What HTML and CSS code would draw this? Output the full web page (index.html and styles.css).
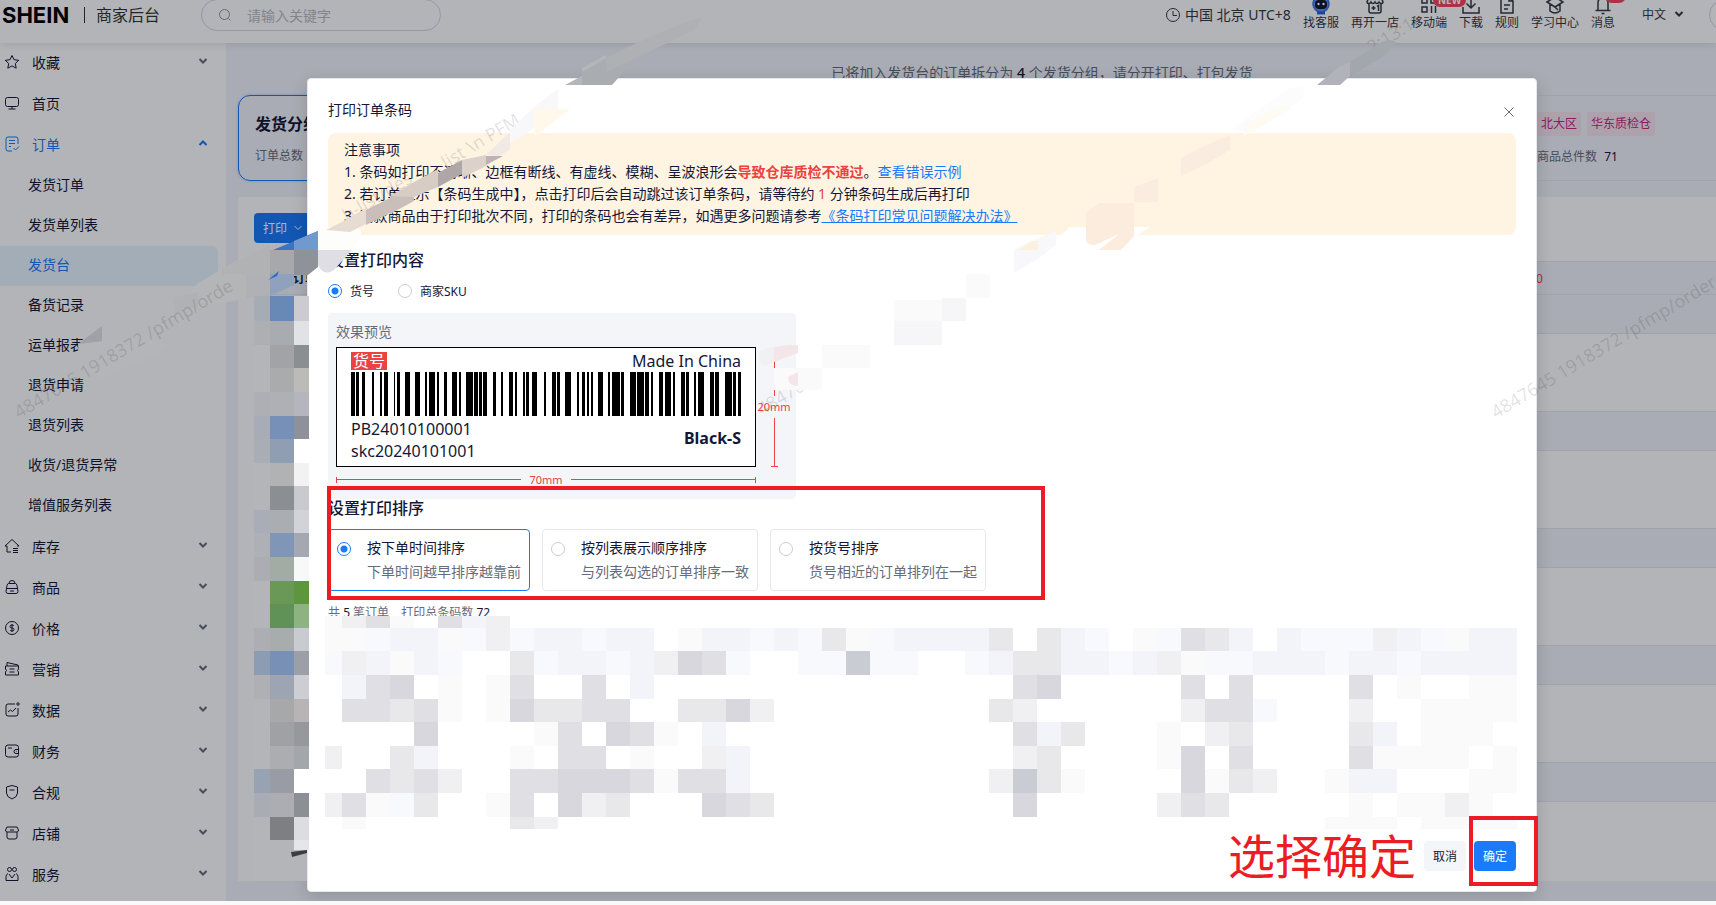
FILE: index.html
```html
<!DOCTYPE html>
<html lang="zh-CN">
	<head>
		<meta charset="utf-8">
		<title>商家后台</title>
		<link rel="stylesheet" href="styles.css">
	</head>
	<body>
		<svg width="0" height="0" class="defs">
			<defs>
				<symbol id="down" viewBox="0 0 10 10"><path d="M1.500 3l3.500 3.500L8.500 3"/></symbol>
				<symbol id="up" viewBox="0 0 10 10"><path d="M1.500 7L5 3.500 8.500 7"/></symbol>
			</defs>
		</svg>
		<div class="app">
			<header class="header">
				<strong class="logo">SHEIN</strong>
				<span class="divider"></span>
				<span class="site">商家后台</span>
				<label class="search">
					<svg class="icon" viewBox="0 0 16 16"><circle cx="7.500" cy="7.500" r="5"/><path d="M11.500 11.500l2 2"/></svg>
					<input type="text" placeholder="请输入关键字" aria-label="搜索">
				</label>
				<div class="tools">
					<span class="zone">
						<svg class="icon" viewBox="0 0 16 16"><circle cx="8" cy="8" r="6.500"/><path d="M8 4v4.500h4"/></svg>
						中国 北京 UTC+8
					</span>
					<a class="tool" href="#">
						<svg viewBox="0 0 20 20"><circle cx="10" cy="9" r="8" fill="#5b8ff9" stroke="#3a6fe0"/><rect x="4" y="5" width="12" height="9" rx="4" fill="#10162c" stroke="none"/><circle cx="7.500" cy="9" r="1.200" fill="#fff" stroke="none"/><circle cx="12.500" cy="9" r="1.200" fill="#fff" stroke="none"/><path d="M6 18h8" stroke="#2a62d8" stroke-width="3"/></svg>
						找客服
					</a>
					<a class="tool" href="#">
						<svg viewBox="0 0 20 20"><path d="M4 2h12l2 5c0 2-3 2-4 0-1 2-3 2-4 0-1 2-3 2-4 0-1 2-4 2-4 0zM4 9v7q0 2 2 2h8q2 0 2-2V9M6.500 13h4M8.500 11v4M12 11.500l1.500-1V16"/></svg>
						再开一店
					</a>
					<a class="tool" href="#">
						<svg viewBox="0 0 20 20"><path d="M3 3h5v5H3zM12 3h5v5h-5zM3 12h5v5H3zM12.500 11v7M16.500 11v7"/></svg>
						移动端
						<em class="badge">NEW</em>
					</a>
					<a class="tool" href="#">
						<svg viewBox="0 0 20 20"><path d="M10 1v12M5.500 8.500L10 13l4.500-4.500M2 12v6h16v-6"/></svg>
						下载
					</a>
					<a class="tool" href="#">
						<svg viewBox="0 0 20 20"><path d="M4 2h8l4 4v12H4zM12 2v4h4M7 10h6M7 14h4"/></svg>
						规则
					</a>
					<a class="tool" href="#">
						<svg viewBox="0 0 20 20"><path d="M2 7l8-5 8 5-8 5zM5 9v7q5 4 10 0V9M10 12l3 3"/></svg>
						学习中心
					</a>
					<a class="tool" href="#">
						<svg viewBox="0 0 20 20"><path d="M5 15V8q0-5 5-5t5 5v7M2.500 15.500h15M8.500 18.500h3"/></svg>
						消息
						<em class="badge dot">12</em>
					</a>
					<button class="lang">中文 <svg class="chev" viewBox="0 0 10 10"><use href="#down"/></svg></button>
					<span class="avatar"></span>
				</div>
			</header>
			<div class="body">
				<nav class="side">
					<a class="item" href="#"><svg class="icon" viewBox="0 0 16 16"><path d="M8 1.500l2 4.200 4.700.6-3.400 3.200.9 4.700L8 11.900l-4.200 2.300.9-4.700L1.300 6.300 6 5.700z"/></svg>收藏<svg class="chev" viewBox="0 0 10 10"><use href="#down"/></svg></a>
					<a class="item" href="#"><svg class="icon" viewBox="0 0 16 16"><rect x="1.500" y="2.500" width="13" height="9" rx="2"/><path d="M8 11.500V14M4.500 14h7"/></svg>首页</a>
					<a class="item on" href="#"><svg class="icon" viewBox="0 0 16 16"><path d="M14 8V3q0-2-2-2H4Q2 1 2 3v10q0 2 2 2h4M5 4.500h6M5 7.500h6M5 10.500h2M9.500 12l2 2 3.500-3.500"/></svg>订单<svg class="chev" viewBox="0 0 10 10"><use href="#up"/></svg></a>
					<div class="subs">
						<a href="#">发货订单</a>
						<a href="#">发货单列表</a>
						<a class="on" href="#">发货台</a>
						<a href="#">备货记录</a>
						<a href="#">运单报表</a>
						<a href="#">退货申请</a>
						<a href="#">退货列表</a>
						<a href="#">收货/退货异常</a>
						<a href="#">增值服务列表</a>
					</div>
					<a class="item" href="#"><svg class="icon" viewBox="0 0 16 16"><path d="M7 14H3V8H1l7-6.500L15 8h-2M9 10.500h5M9 12.500h5M9 14.500h5"/></svg>库存<svg class="chev" viewBox="0 0 10 10"><use href="#down"/></svg></a>
					<a class="item" href="#"><svg class="icon" viewBox="0 0 16 16"><path d="M5 4.500q0-3 3-3t3 3M4.500 4.500h7q1 0 1.500 2l1 6q0 2-2 2H4q-2 0-2-2l1-6q.5-2 1.500-2zM2.500 9.500h11M6 12h4"/></svg>商品<svg class="chev" viewBox="0 0 10 10"><use href="#down"/></svg></a>
					<a class="item" href="#"><svg class="icon" viewBox="0 0 16 16"><circle cx="8" cy="8" r="6.500"/><path d="M10 6q-.5-1-2-1-2 0-2 1.500T8 8t2 1.500T8 11q-1.500 0-2-1M8 4v8"/></svg>价格<svg class="chev" viewBox="0 0 10 10"><use href="#down"/></svg></a>
					<a class="item" href="#"><svg class="icon" viewBox="0 0 16 16"><path d="M3 5V1.500L14 4v1M1.500 5h13v3q-2 1.500 0 3v3h-13v-3q2-1.500 0-3zM5.500 8h5M5.500 11h5"/></svg>营销<svg class="chev" viewBox="0 0 10 10"><use href="#down"/></svg></a>
					<a class="item" href="#"><svg class="icon" viewBox="0 0 16 16"><path d="M11 2H4Q2 2 2 4v8q0 2 2 2h8q2 0 2-2V6M4 10l2.500-2 2 1.500L12 6"/><circle cx="14" cy="2" r="1.200"/></svg>数据<svg class="chev" viewBox="0 0 10 10"><use href="#down"/></svg></a>
					<a class="item" href="#"><svg class="icon" viewBox="0 0 16 16"><rect x="1.500" y="2" width="13" height="12" rx="2.500"/><path d="M4 5h4M14.500 6.500H12q-2 0-2 2t2 2h2.500M12 8.500h.5"/></svg>财务<svg class="chev" viewBox="0 0 10 10"><use href="#down"/></svg></a>
					<a class="item" href="#"><svg class="icon" viewBox="0 0 16 16"><path d="M8 1.500L13.500 3v6q0 4-5.500 6-5.500-2-5.500-6V3zM5.500 6h5"/></svg>合规<svg class="chev" viewBox="0 0 10 10"><use href="#down"/></svg></a>
					<a class="item" href="#"><svg class="icon" viewBox="0 0 16 16"><path d="M3 2h10l1.500 3q0 2-2 2h-9q-2 0-2-2zM3 7v5q0 2 2 2h6q2 0 2-2V7M6 5h4"/></svg>店铺<svg class="chev" viewBox="0 0 10 10"><use href="#down"/></svg></a>
					<a class="item" href="#"><svg class="icon" viewBox="0 0 16 16"><circle cx="5.500" cy="3.500" r="2"/><circle cx="10.500" cy="3.500" r="2"/><path d="M4 7.500q-2 1-2 3v4h12v-4q0-2-2-3M5 8l3 4 3-4"/></svg>服务<svg class="chev" viewBox="0 0 10 10"><use href="#down"/></svg></a>
				</nav>
				<main class="main">
					<p class="tip">已将加入发货台的订单拆分为 <b>4</b> 个发货分组，请分开打印、打包发货</p>
					<div class="groups">
						<section class="group current">
							<h2>发货分组1</h2>
							<p>订单总数</p>
						</section>
						<section class="group last">
							<div class="tags"><span>北大区</span><span>华东质检仓</span></div>
							<p class="count">商品总件数 <b>71</b></p>
						</section>
					</div>
					<section class="panel">
						<button class="print">打印 <svg class="chev" viewBox="0 0 10 10"><use href="#down"/></svg></button>
						<table class="orders">
							<thead><tr><th class="name">订单</th><th class="num">0</th></tr></thead>
							<tbody>
								<tr class="band"><td colspan="2"></td></tr><tr><td colspan="2"></td></tr>
								<tr class="band"><td colspan="2"></td></tr><tr><td colspan="2"></td></tr>
								<tr class="band"><td colspan="2"></td></tr><tr><td colspan="2"></td></tr>
								<tr class="band"><td colspan="2"></td></tr><tr><td colspan="2"></td></tr>
								<tr class="band"><td colspan="2"></td></tr><tr><td colspan="2"></td></tr>
							</tbody>
						</table>
					</section>
				</main>
			</div>
			<div class="mask"></div>
			<div class="modal" role="dialog" aria-labelledby="title">
				<div class="modal-head">
					<span id="title">打印订单条码</span>
					<button class="close" aria-label="关闭"><svg viewBox="0 0 12 12"><path d="M1.500 1.500l9 9M10.500 1.500l-9 9"/></svg></button>
				</div>
				<div class="notice">
					<p>注意事项</p>
					<p>1. 条码如打印不清晰、边框有断线、有虚线、模糊、呈波浪形会<b>导致仓库质检不通过</b>。<a href="#">查看错误示例</a></p>
					<p>2. 若订单显示【条码生成中】，点击打印后会自动跳过该订单条码，请等待约 <i>1</i> 分钟条码生成后再打印</p>
					<p>3. 同款商品由于打印批次不同，打印的条码也会有差异，如遇更多问题请参考<a class="line" href="#">《条码打印常见问题解决办法》</a></p>
				</div>
				<h3>设置打印内容</h3>
				<div class="kinds">
					<label><input type="radio" name="kind" checked>货号</label>
					<label><input type="radio" name="kind">商家SKU</label>
				</div>
				<div class="preview">
					<p>效果预览</p>
					<div class="size">
						<div class="ticket">
							<div class="row"><span class="sku">货号</span><span>Made In China</span></div>
							<svg class="barcode" viewBox="0 0 1170 132" preserveAspectRatio="none"></svg>
							<div class="row">
								<div>PB24010100001<br>skc20240101001</div>
								<b>Black-S</b>
							</div>
						</div>
						<div class="tall">20mm</div>
						<div class="wide">70mm</div>
					</div>
				</div>
				<h3 class="sort">设置打印排序</h3>
				<div class="sorts">
					<label class="card on"><input type="radio" name="sort" checked><span>按下单时间排序<small>下单时间越早排序越靠前</small></span></label>
					<label class="card"><input type="radio" name="sort"><span>按列表展示顺序排序<small>与列表勾选的订单排序一致</small></span></label>
					<label class="card"><input type="radio" name="sort"><span>按货号排序<small>货号相近的订单排列在一起</small></span></label>
				</div>
				<p class="total">共 <b>5</b> 笔订单 <span>打印总条码数 <b>72</b></span></p>
				<svg class="mosaic" viewBox="0 0 1193 213" preserveAspectRatio="none"></svg>
				<div class="foot">
					<span class="hint">选择确定</span>
					<button class="btn">取消</button>
					<button class="btn primary">确定</button>
				</div>
			</div>
			<svg class="cover">
				<g class="mark">
					<text transform="translate(347 222) rotate(-31)">h-list/des</text>
					<text transform="translate(446 169) rotate(-31)">list \n PFM</text>
					<text transform="translate(1372 54) rotate(-31)">2:13:1</text>
					<text transform="translate(1496 419) rotate(-31)">4847645 1918372 /pfmp/order-</text>
					<text transform="translate(762 416) rotate(-31)">4847645</text>
				</g>
				<g class="strip">
					<path fill="#9fa1a6" d="M78 344l24-18v15l-7 4z"/>
					<path fill="#b3b5b8" d="M78 344l67-8 25 9-20 13-50 22-20-12z"/>
					<path fill="#b4b5b6" d="M198 283l48-28 24-5v24l-24 24-46 10-28 7 12-16z"/>
					<path fill="#b0b1b4" d="M246 274h24v24h-24z M174 298l24-6v14l-24 8z"/>
					<path fill="#b1b2b4" d="M222 268l48-23v29h-48z"/>
					<path fill="#3b74bf" d="M273 250l45-19v19z"/>
					<path fill="#7199cf" d="M294 241l24-10v19h-24z"/>
					<path fill="#a7a8ab" d="M270 250h24v24h-24z"/>
					<path fill="#909299" d="M294 250h24v17l-10 8h-14z"/>
					<path fill="#8fa1bd" d="M270 274h24v11l-24 11z"/>
					<path fill="#2f6fc1" d="M268 280l11-9-2 5z"/>
					<path fill="#fdfdfc" d="M318 232l10-5h28q7 2 5 9l-10 16h-33z"/>
					<path fill="#dfdee4" d="M318 250h34l-18 20q-7 5-13 0l-3-5z"/>
					<path fill="#e6dcd2" d="M326 230l16-8 24-14v16l-16 8z"/>
					<path fill="#c9beb9" d="M366 210l24-12v15l-24 12z M390 196l24-13v18l-24 13z"/>
					<path fill="#d8cdc5" d="M390 196l24-14 24-13v18l-24 10z"/>
					<path fill="#afa6a7" d="M438 173l24-13v14l-24 13z"/>
					<path fill="#dcd1cb" d="M462 160l24-5v11l-24 12z"/>
					<path fill="#bdb3b4" d="M486 156h17l-17 9z"/>
					<path fill="#f1e9e3" d="M486 155l24-23v17l-10 7z"/>
					<path fill="#f8f8fa" d="M510 130l24-23 24-18v20l-33 25-15 9z"/>
					<path fill="#fff8eb" d="M534 109h36l-36 28z"/>
					<path fill="#b5b6bb" d="M565 85l17-9v-8l24-13v30z"/>
					<path fill="#a9acb1" d="M582 72l48-27v20l-18 20h-30z"/>
					<path fill="#aeb0b4" d="M606 58l50-24 36-14 10-2-8 12-62 30-26 12z"/>
					<path fill="#b2b3ba" d="M1317 85l22-18 11-5v14l-10 9z"/>
					<path fill="#a2a6ad" d="M1350 62l24-15 8-5q8-4 14 0l-12 14-34 20z"/>
					<path fill="#fcfcfd" d="M1230 130l60-42 14-1-2 12-50 35z"/>
					<path fill="#fffaf2" d="M1245 124l35-17 12 1-48 28z"/>
					<path fill="#faeddf" d="M1181 158l25-13 24-10v15l-24 14-25 12z M1134 187l24-9v24h-24z"/>
					<path fill="#fff" d="M1050 245l20-18h80l-12 8-70 14z"/>
					<path fill="#fcecdd" d="M1086 213l14-10h34v33l-13 14h-22l20-16-24 11q-9 0-9-6z"/>
					<path fill="#f8f8fa" d="M1014 250l14-8 28-11v14l-18 14-24 14z"/>
					<path fill="#fdf0de" d="M1018 250l15-9h5v9z"/>
					<path fill="#fafafb" d="M966 274h24v24h-24z M894 300h48v22h-48z M822 345h48v23h-48z M774 368h48v22h-48z"/>
					<path fill="#f6f6f8" d="M942 298h24v23h-24z M894 321h48v24h-48z"/>
					<path fill="#f1f1f3" d="M758 353q6-6 16-6v15l-8 4q-8 0-8-13z"/>
					<path fill="#f4e6e8" d="M774 347l14-2h10v8l-24 9z M788 377l10-5v14q-10 0-10-9z"/>
				</g>
				<g class="mark">
					<text transform="translate(19 419) rotate(-31)">4847645 1918372 /pfmp/orde</text>
				</g>
				<g id="column"></g>
				<path fill="#3a3e41" d="M291 852l16-2v3l-15 4z"/>
			</svg>
			<div class="frame sort-frame"></div>
			<div class="frame ok-frame"></div>
		</div>
		<script src="script.js"></script>
	</body>
</html>
```
FILE: styles.css
```css
*{
	margin: 0;
	padding: 0;
	box-sizing: border-box;
}
html,body{
	height: 100%;
	overflow: hidden;
	background: #f9f9fa;
}
body,button,input{
	font-family: "Noto Sans", "Noto Sans CJK SC", sans-serif;
	font-size: 14px;
	color: #141737;
}
a{
	color: inherit;
	text-decoration: none;
}
button{
	border: 0;
	background: none;
}
svg{
	fill: none;
	stroke: currentColor;
}
b{
	font-weight: 500;
}
.defs{
	position: absolute;
}
.icon{
	width: 16px;
	height: 16px;
	flex: none;
}
.chev{
	width: 10px;
	height: 10px;
	flex: none;
}
.app{
	position: relative;
	height: calc(100% - 4px);
	overflow: hidden;
	background: #f1f4fb;
}

/* header */
.header{
	position: relative;
	height: 43px;
	padding: 0 0 12px 2px;
	display: flex;
	align-items: flex-end;
	background: #fff;
	box-shadow: 0 2px 8px rgba(0, 0, 0, .1);
	overflow: hidden;
	line-height: 32px;
}
.logo{
	font-family: Inter, sans-serif;
	font-size: 22px;
	width: 82px;
	color: #000;
}
.divider{
	width: 1px;
	height: 16px;
	margin: 0 11px 8px 0;
	background: #333;
}
.site{
	width: 105px;
	font-size: 16px;
	color: #333;
}
.search{
	width: 240px;
	height: 32px;
	display: flex;
	align-items: center;
	gap: 14px;
	padding: 0 15px;
	border: 1px solid #d5d7de;
	border-radius: 16px;
	color: #8f94a3;
}
.search input{
	width: 160px;
	border: 0;
	outline: 0;
	background: none;
}
.search input::placeholder{
	color: #b9bcc6;
}
.tools{
	margin-left: auto;
	margin-right: -25px;
	display: flex;
	align-items: flex-end;
	gap: 12px;
	color: #333842;
}
.zone{
	display: flex;
	align-items: center;
	gap: 4px;
}
.tool{
	position: relative;
	display: flex;
	flex-direction: column;
	align-items: center;
	font-size: 12px;
	line-height: 16px;
}
.tool svg{
	width: 20px;
	height: 20px;
	stroke-width: 1.5;
}
.badge{
	position: absolute;
	top: -2px;
	left: 22px;
	padding: 0 5px;
	border-radius: 7px;
	background: #f5455c;
	color: #fff;
	font-size: 10px;
	font-style: normal;
	font-weight: 700;
	line-height: 14px;
}
.dot{
	top: -6px;
	left: 14px;
}
.lang{
	display: flex;
	align-items: center;
	gap: 8px;
	height: 28px;
	margin: 0 13px 3px 15px;
	font-size: 12px;
	color: #333842;
	stroke-width: 2;
}
.avatar{
	width: 32px;
	height: 32px;
	border: 1px solid #d5d7de;
	border-radius: 50%;
}

/* side menu */
.body{
	display: flex;
	width: calc(100% + 140px);
	height: calc(100% - 43px);
}
.side{
	flex: none;
	width: 226px;
	background: #fff;
}
.item{
	display: flex;
	align-items: center;
	gap: 12px;
	height: 41px;
	padding: 0 18px 3px 4px;
}
.item .chev{
	margin: 0 0 2px auto;
	color: #666c7c;
	stroke-width: 2;
}
.item.on,.item.on .chev,.subs .on{
	color: #197afa;
}
.subs{
	margin-right: 8px;
	padding-bottom: 1px;
}
.subs a{
	display: block;
	height: 40px;
	padding-left: 28px;
	line-height: 38px;
	border-radius: 0 6px 6px 0;
}
.subs .on{
	background: #e8f5ff;
}

/* page behind the dialog */
.main{
	flex: 1;
	padding: 20px 0 20px 12px;
	display: flex;
	flex-direction: column;
}
.tip{
	height: 32px;
	padding-right: 10px;
	line-height: 20px;
	text-align: center;
	color: #666c7c;
}
.tip b{
	color: #141737;
}
.groups{
	display: flex;
	gap: 16px;
	margin-bottom: 16px;
}
.group{
	flex: 1;
	height: 86px;
	padding: 16px;
	border: 1px solid #e4e7ef;
	border-radius: 12px;
	color: #666c7c;
	font-size: 12px;
}
.group.current{
	border-color: #197afa;
	box-shadow: 0 0 2px 1px #cfe2fb;
}
.group h2{
	font-size: 16px;
	line-height: 24px;
	margin-bottom: 10px;
	color: #141737;
}
.group.last{
	flex: 0 0 352px;
	padding: 16px 32px;
}
.tags{
	display: flex;
	gap: 6px;
	color: #c92486;
}
.tags span{
	padding: 0 4px;
	line-height: 24px;
	border-radius: 2px;
	background: #f7e6ee;
}
.count{
	margin-top: 11px;
}
.count b{
	margin-left: 4px;
	font-weight: 400;
	color: #141737;
}
.panel{
	flex: 1;
	padding: 16px 0 0 16px;
	background: #fff;
}
.print{
	display: flex;
	align-items: center;
	gap: 6px;
	width: 62px;
	height: 30px;
	margin-bottom: 18px;
	padding: 0 9px;
	border-radius: 4px;
	background: #197afa;
	color: #fff;
	font-size: 12px;
}
.orders{
	width: 100%;
	border-collapse: collapse;
}
.orders th,.orders td{
	border-top: 1px solid #e4e7ef;
	text-align: left;
}
.orders th{
	height: 33px;
	padding-left: 39px;
	background: #f1f4fb;
	font-size: 12px;
}
.orders td{
	height: 78px;
}
.orders .band td{
	height: 39px;
	background: #f1f4fb;
}
.orders .num{
	width: 320px;
	padding: 0;
	color: #f23c45;
	font-size: 12px;
	font-weight: 400;
}
.mask{
	position: absolute;
	inset: 0;
	background: rgba(2, 8, 18, .3);
}

/* dialog */
.modal{
	position: absolute;
	top: 78px;
	right: 179px;
	bottom: 9px;
	left: 307px;
	padding: 18px 20px 0;
	border: 1px solid #e6e8ee;
	border-radius: 4px;
	background: #fff;
	box-shadow: 0 4px 16px rgba(0, 0, 0, .15);
	display: flex;
	flex-direction: column;
}
.modal-head{
	display: flex;
	align-items: center;
	justify-content: space-between;
	height: 24px;
	margin-bottom: 12px;
}
.close{
	padding: 6px 1px 0;
	color: #666c7c;
}
.close svg{
	width: 12px;
	height: 12px;
}
.notice{
	padding: 6px 16px 8px;
	border-radius: 8px;
	background: #fff3e1;
	line-height: 22px;
}
.notice b{
	font-weight: 700;
	color: #eb4242;
}
.notice i{
	font-style: normal;
	color: #eb4242;
}
.notice a{
	color: #197afa;
}
.notice .line{
	text-decoration: underline;
}
h3{
	margin-top: 13px;
	font-size: 16px;
	font-weight: 500;
	line-height: 24px;
}
.kinds{
	display: flex;
	gap: 24px;
	margin: 9px 0 12px;
}
.kinds label{
	display: flex;
	align-items: center;
	gap: 8px;
	height: 20px;
	font-size: 12px;
}
input[type=radio]{
	appearance: none;
	flex: none;
	width: 14px;
	height: 14px;
	border: 1px solid #c9cbd8;
	border-radius: 50%;
	background: #fff;
}
input[type=radio]:checked{
	border-color: #197afa;
	background: radial-gradient(#197afa 3px, #fff 4px);
}
.preview{
	width: 468px;
	padding: 8px 8px 8px;
	border-radius: 4px;
	background: #f4f5f9;
}
.preview p{
	margin-bottom: 4px;
	line-height: 22px;
	color: #666c7c;
}
.size{
	display: grid;
	grid-template-columns: 420px 36px;
	row-gap: 2px;
	font-size: 11px;
	color: #eb4242;
}
.ticket{
	height: 120px;
	padding: 2px 14px;
	border: 1px solid #000;
	background: #fff;
	font-size: 16px;
	line-height: 22px;
	color: #141737;
}
.row{
	display: flex;
	align-items: center;
	justify-content: space-between;
}
.row b{
	padding-bottom: 4px;
	font-weight: 700;
}
.row + .barcode{
	margin-bottom: 2px;
}
.sku{
	padding: 0 2px;
	line-height: 18px;
	background: #eb4242;
	color: #fff;
}
.barcode{
	display: block;
	width: 100%;
	height: 44px;
	fill: #000;
	stroke: none;
}
.tall,.wide{
	display: flex;
	align-items: center;
	line-height: 22px;
}
.tall{
	flex-direction: column;
}
.tall::before,.tall::after{
	content: "";
	flex: 1;
	width: 1px;
	background: #eb4242;
}
.tall::after{
	width: 7px;
	border-bottom: 1px solid #eb4242;
	background: linear-gradient(90deg, transparent 3px, #eb4242 3px, #eb4242 4px, transparent 4px);
}
.wide{
	gap: 8px;
}
.wide::before,.wide::after{
	content: "";
	flex: 1;
	height: 6px;
	border: 0 solid #eb4242;
	background: linear-gradient(transparent 2px, #eb4242 2px, #eb4242 3px, transparent 3px);
}
.wide::before{
	border-left-width: 1px;
}
.wide::after{
	border-right-width: 1px;
}
h3.sort{
	margin: -3px 0 9px;
}
.sorts{
	display: flex;
	gap: 12px;
}
.card{
	display: flex;
	gap: 16px;
	padding: 6px 8px;
	border: 1px solid #e6e8ee;
	border-radius: 4px;
	line-height: 24px;
}
.card input{
	margin-top: 6px;
}
.card.on{
	border-color: #197afa;
}
.card small{
	display: block;
	font-size: 14px;
	color: #666c7c;
}
.total{
	margin-top: 13px;
	font-size: 12px;
	line-height: 18px;
	color: #666c7c;
}
.total b{
	font-weight: 400;
	color: #141737;
}
.total span{
	margin-left: 9px;
}
.mosaic{
	position: relative;
	flex: none;
	width: calc(100% + 4px);
	height: 213px;
	margin: -6px 0 0 -3px;
	stroke: none;
}
.foot{
	display: flex;
	align-items: center;
	justify-content: flex-end;
	gap: 8px;
	height: 54px;
}
.hint{
	font-size: 47px;
	line-height: 54px;
	color: #ed1c24;
}
.btn{
	width: 42px;
	height: 30px;
	border-radius: 4px;
	background: #f4f5f9;
	font-size: 12px;
}
.primary{
	background: #197afa;
	color: #fff;
}

/* marks laid over the whole screen */
.cover{
	position: absolute;
	top: 0;
	left: 0;
	width: 100%;
	height: 100%;
	stroke: none;
	pointer-events: none;
}
.mark{
	font-size: 18px;
	fill: rgba(0, 0, 0, .12);
}
.frame{
	position: absolute;
	border: 4px solid #ed1c24;
	pointer-events: none;
}
.sort-frame{
	top: 486px;
	left: 327px;
	width: 718px;
	height: 114px;
}
.ok-frame{
	right: 178px;
	bottom: 15px;
	width: 69px;
	height: 70px;
}
```
FILE: script.js
```js
const NS = 'http://www.w3.org/2000/svg';

function rect(parent, x, y, w, h, fill) {
	const el = document.createElementNS(NS, 'rect');
	el.setAttribute('x', x);
	el.setAttribute('y', y);
	el.setAttribute('width', w);
	el.setAttribute('height', h);
	el.setAttribute('fill', fill);
	el.setAttribute('shape-rendering', 'crispEdges');
	parent.appendChild(el);
}

// barcode: start, end of each bar
const bars = [
	93,105, 108,117, 127,134, 157,163, 181,187, 192,204, 221,226, 232,239, 256,270, 285,299,
	316,321, 327,345, 350,356, 373,380, 396,410, 416,422, 438,458, 462,474, 478,486, 490,502,
	520,527, 543,549, 567,580, 585,590, 608,614, 618,626, 636,650, 672,678, 696,708, 711,719,
	735,754, 771,778, 785,796, 800,807, 813,819, 834,848, 863,869, 876,900, 903,912, 930,948,
	952,972, 976,986, 992,1000, 1017,1030, 1035,1052, 1058,1065, 1082,1094, 1098,1106,
	1122,1128, 1134,1152, 1170,1182, 1186,1198, 1215,1235, 1239,1249, 1253,1263
];
const barcode = document.querySelector('.barcode');
for (let i = 0; i < bars.length; i += 2) {
	rect(barcode, bars[i] - 93, 0, bars[i + 1] - bars[i], 132, '#000');
}

// blurred order list inside the dialog
const shades = {
	a: '#fafafa', h: '#f8f9fc', b: '#f3f4f9', c: '#f0f0f2',
	d: '#e8e8eb', e: '#dfdfe4', f: '#d7d7dd', g: '#c9ccd3'
};
const rows = [
	'acea.ebc',
	'aahbbahchbbhbb.abbhbhdahbbbbd.dbh.ahedb.bhhhcbhabb',
	'hcbabh..dhbbhbcfeh..hhghh..hbddbbhbcahhbbbhbbhbbbb',
	'.bef.a.ae..e.b...............ef.....e.e....e.a..aa',
	'.eedea.afddee..ddfc.........dc......ceeh...c..aaaa',
	'....f....ae.fea.b............ebd...a.cd....db.aaa.',
	'c..db...a.ee.a..cb...........cd....af.e....eaaaa.a',
	'..edec..eefffeaeeb..........cgda....fadc..abb...aa',
	'ceahd..ae.fcd...fed..........f.....ced.....a.aaca.',
	'.a......dc................................aaa.aaaa'
];
const tops = [0, 12, 35, 59, 83, 106, 130, 153, 177, 201, 213];
const mosaic = document.querySelector('.mosaic');
rect(mosaic, 0, 0, 1193, 213, '#fff');
rows.forEach((row, r) => {
	[...row].forEach((key, c) => {
		if (key === '.') return;
		const x = c ? 17 + (c - 1) * 24 : 0;
		rect(mosaic, x, tops[r], c ? 24 : 17, tops[r + 1] - tops[r], shades[key]);
	});
});

// blurred thumbnails left of the dialog
const thumbs = [
	[296, '#a6acb5', '#6888b6', '#cbcbd1'],
	[321, '#adafb3', '#a8acb0', '#e1e2e5'],
	[345, '', '#a1a3a6', '#8a8f91'],
	[368, '', '#a9abad', '#bcbbb8'],
	[392, '#aeafb5', '#afb0b5', '#b5b6bd'],
	[416, '#a7acb6', '#7690b8', '#8f919a'],
	[439, '#a9adb6', '#909eb3', '#ffffff'],
	[463, '', '#b1b2b4', '#f2f2f2'],
	[486, '', '#8b8f92', '#c9cacd'],
	[510, '#a9adb8', '#aaadb1', '#d2d3d8'],
	[533, '#adb0b5', '#8096b6', '#a5a8b0'],
	[557, '#abadb2', '#a2aca5', '#f7f9f9'],
	[581, '', '#6a9857', '#5e963e'],
	[604, '', '#609156', '#8fb283'],
	[628, '#adaeb4', '#a7adad', '#cacbd0'],
	[651, '#8c9cb3', '#7890b6', '#9c9fa7'],
	[675, '#afb0b4', '#9da4b2', '#cdced3'],
	[699, '', '#a7a8aa', '#b8b4b5'],
	[722, '', '#a0a1a4', '#97989b'],
	[746, '', '#abadb0', '#a3a6aa'],
	[769, '#97a3b3', '#9a9ca5', '#ffffff'],
	[793, '#a9abb5', '#abadb2', '#8c8f94'],
	[817, '', '#7e7f82', '#dcdde0'],
	[840, '', '', '#e4e6e7'],
	[850]
];
const column = document.getElementById('column');
const lefts = [254, 270, 294, 309];
for (let i = 0; i < thumbs.length - 1; i++) {
	const y = thumbs[i][0];
	for (let c = 0; c < 3; c++) {
		rect(column, lefts[c], y, lefts[c + 1] - lefts[c], thumbs[i + 1][0] - y, thumbs[i][c + 1] || '#b3b5b8');
	}
}
rect(column, 254, 850, 53, 31, '#b3b5b8');
```
